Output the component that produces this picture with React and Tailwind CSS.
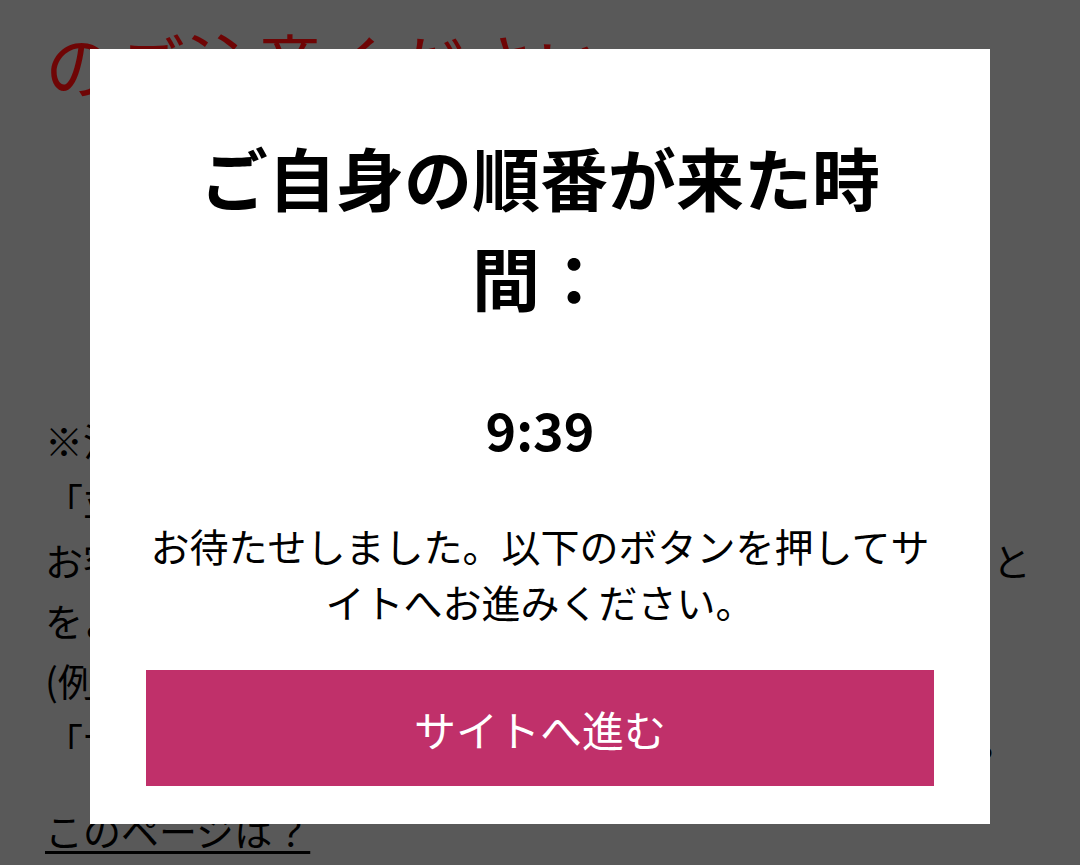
export default function App() {
  const jp = { fontFamily: '"Noto Sans CJK JP", "Noto Sans", sans-serif' };
  return (
    <div style={jp} className="relative min-h-[865px] w-full overflow-hidden bg-[#595959] text-black">
      {/* dimmed page behind the dialog */}
      <div className="px-[45px]">
        <h1 className="mt-[16px] text-[70px] font-normal leading-[95px] text-[#6f0505] whitespace-nowrap">
          のご注意ください
        </h1>
        <p className="mt-[299px] text-[38px] leading-[60px] whitespace-nowrap">
          ※注意事項
          <br />
          「並び直す」ボタンは押さないでください。
          <br />
          お客様の順番になると、自動的にサイトへ移動できること
          <br />
          をよくご確認のうえ、しばらくお待ちください。
          <br />
          (例)順番が来た時間が9:39の場合
          <br />
          「サイトへ進む」ボタンは(9:39)から押下してください。
        </p>
        <a href="#" className="mt-[30px] inline-block text-[38px] leading-[60px] text-black underline underline-offset-[5px] decoration-[3px]">
          このページは？
        </a>
      </div>

      {/* dialog */}
      <div className="absolute inset-0 flex justify-center pt-[49px]">
        <div className="flex h-[775px] w-[900px] flex-col items-center bg-white px-[56px] pt-[78px] pb-[38px]">
          <h2 className="w-full text-center text-[68px] font-bold leading-[100px]">
            ご自身の順番が来た時間：
          </h2>
          <div className="mt-[72px] text-center text-[52px] font-bold leading-[60px]">9:39</div>
          <p className="mt-[58px] w-full text-center text-[39px] leading-[56px]">
            お待たせしました。以下のボタンを押してサイトへお進みください。
          </p>
          <button className="mt-[41px] flex h-[116px] w-full items-center justify-center bg-[#c0306a] text-[42px] text-white">
            サイトへ進む
          </button>
        </div>
      </div>
    </div>
  );
}
